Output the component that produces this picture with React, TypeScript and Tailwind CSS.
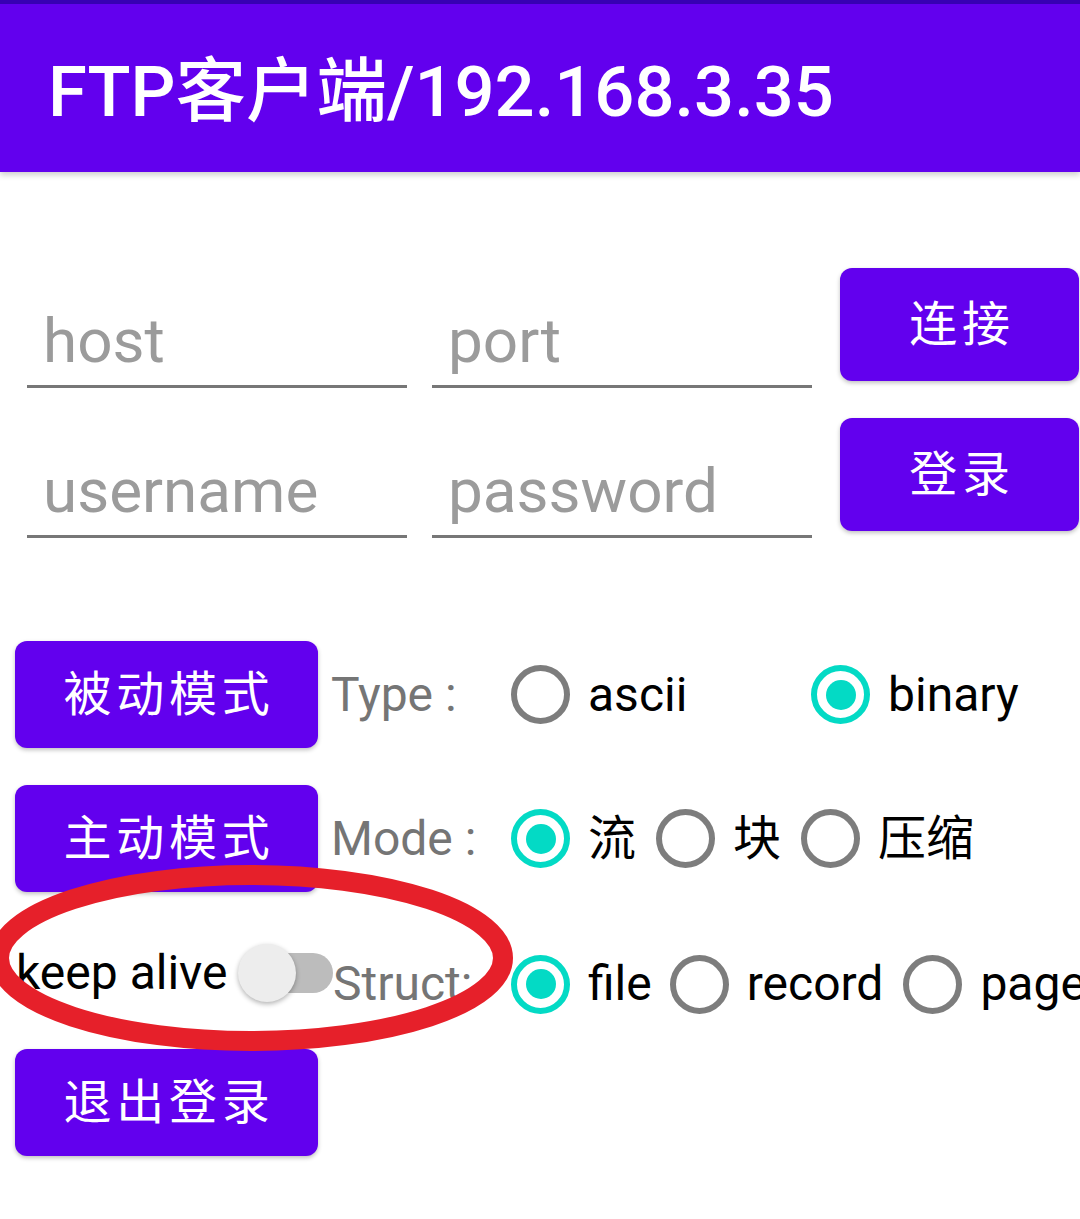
import React from 'react';

const FONT = { fontFamily: 'Roboto, "Noto Sans CJK SC", sans-serif' };

function Field({ placeholder, className = '' }: { placeholder: string; className?: string }) {
  return (
    <div className={`w-[380px] h-[120px] flex items-end pl-[16px] pb-[8px] border-b-[3px] border-[#777777] ${className}`}>
      <span className="text-[62px] leading-[72px] text-[#9b9b9b]">{placeholder}</span>
    </div>
  );
}

function PurpleButton({ children, className = '' }: { children: React.ReactNode; className?: string }) {
  return (
    <div
      className={`bg-[#6200ee] rounded-[12px] text-white text-[48px] tracking-[0.1em] pl-[5px] flex items-center justify-center shadow-[0_2px_4px_rgba(0,0,0,0.25)] shrink-0 ${className}`}
    >
      {children}
    </div>
  );
}

function Radio({ checked, label, className = '' }: { checked?: boolean; label: string; className?: string }) {
  return (
    <div className={`flex items-center shrink-0 ${className}`}>
      <div
        className={`ml-[3px] w-[59px] h-[59px] rounded-full border-[6px] flex items-center justify-center ${
          checked ? 'border-[#03dac5]' : 'border-[#7d7d7d]'
        }`}
      >
        {checked && <div className="w-[30px] h-[30px] rounded-full bg-[#03dac5]" />}
      </div>
      <span className="ml-[18px] text-[48px] leading-none text-black">{label}</span>
    </div>
  );
}

export default function App() {
  return (
    <div className="relative w-[1080px] h-[1219px] bg-white overflow-hidden" style={FONT}>
      <header className="h-[172px] bg-[#6200ee] border-t-4 border-[#3700b3] flex items-center pl-[48px] shadow-[0_3px_6px_rgba(0,0,0,0.2)]">
        <h1 className="text-[70.5px] font-medium text-white leading-none pt-[8px]">FTP客户端/192.168.3.35</h1>
      </header>

      <div className="flex items-start mt-[96px] pl-[27px]">
        <Field placeholder="host" />
        <Field placeholder="port" className="ml-[25px]" />
        <PurpleButton className="ml-[28px] w-[239px] h-[113px]">连接</PurpleButton>
      </div>

      <div className="flex items-start mt-[30px] pl-[27px]">
        <Field placeholder="username" />
        <Field placeholder="password" className="ml-[25px]" />
        <PurpleButton className="ml-[28px] w-[239px] h-[113px]">登录</PurpleButton>
      </div>

      <div className="flex items-center mt-[103px]">
        <PurpleButton className="ml-[15px] w-[303px] h-[107px]">被动模式</PurpleButton>
        <div className="w-[190px] pl-[13px] text-[48px] text-[#757575] leading-none shrink-0">Type :</div>
        <Radio label="ascii" className="w-[300px]" />
        <Radio checked label="binary" />
      </div>

      <div className="flex items-center mt-[37px]">
        <PurpleButton className="ml-[15px] w-[303px] h-[107px]">主动模式</PurpleButton>
        <div className="w-[190px] pl-[13px] text-[48px] text-[#757575] leading-none shrink-0">Mode :</div>
        <Radio checked label="流" className="mr-[17px]" />
        <Radio label="块" className="mr-[17px]" />
        <Radio label="压缩" />
      </div>

      <div className="flex items-center h-[90px] mt-[36px]">
        <div className="w-[238px] pl-[16px] text-[48px] text-black leading-none shrink-0">keep alive</div>
        <div className="relative w-[95px] h-[62px] shrink-0">
          <div className="absolute left-[14px] right-0 top-[11px] h-[40px] rounded-full bg-[#bcbcbc]" />
          <div className="absolute left-0 top-[2px] w-[58px] h-[58px] rounded-full bg-[#ededed] shadow-[0_2px_5px_rgba(0,0,0,0.3)]" />
        </div>
        <div className="w-[175px] mt-[22px] text-[48px] text-[#757575] leading-none shrink-0">Struct:</div>
        <div className="flex items-center mt-[22px]">
          <Radio checked label="file" className="mr-[15px]" />
          <Radio label="record" className="mr-[17px]" />
          <Radio label="page" />
        </div>
      </div>

      <div className="mt-[31px]">
        <PurpleButton className="ml-[15px] w-[303px] h-[107px]">退出登录</PurpleButton>
      </div>

      {/* hand-drawn annotation over the keep alive switch */}
      <svg className="absolute left-0 top-0 pointer-events-none" width="1080" height="1219">
        <ellipse cx="251" cy="958" rx="252" ry="83" fill="none" stroke="#e6202a" strokeWidth="20" />
      </svg>
    </div>
  );
}
